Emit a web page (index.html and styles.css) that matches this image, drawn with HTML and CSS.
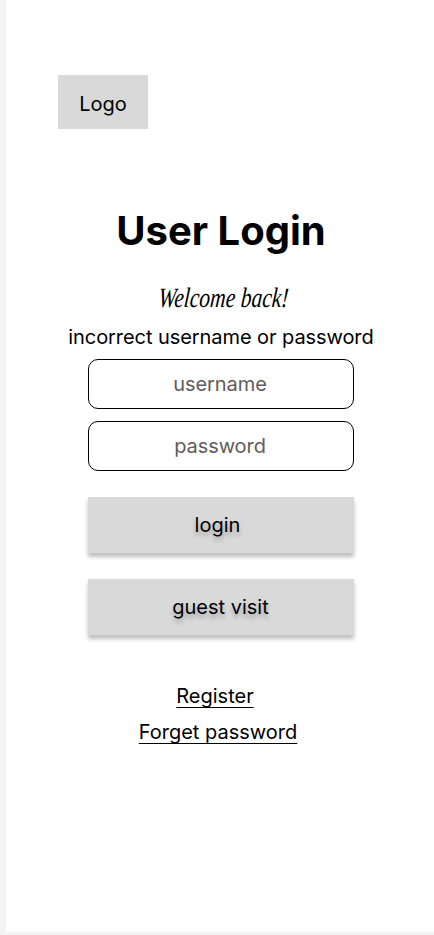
FILE: index.html
```
<!DOCTYPE html>
<html lang="en">
<head>
<meta charset="utf-8">
<title>User Login</title>
<link rel="stylesheet" href="styles.css">
</head>
<body>
<main class="screen">
  <div class="logo">Logo</div>
  <form class="login">
    <h1 class="title">User Login</h1>
    <p class="welcome"><span class="welcome-text">Welcome back!</span></p>
    <p class="error">incorrect username or password</p>
    <input class="field" type="text" placeholder="username">
    <input class="field" type="password" placeholder="password">
    <button class="button" type="button"><span class="login-label">login</span></button>
    <button class="button" type="button"><span class="guest-label">guest visit</span></button>
    <nav class="links">
      <a class="link register" href="#">Register</a>
      <a class="link" href="#">Forget password</a>
    </nav>
  </form>
</main>
</body>
</html>
```

FILE: styles.css
```
* {
  box-sizing: border-box;
}

body {
  margin: 0;
  padding: 0 0 3px 6px;
  height: 935px;
  overflow: hidden;
  background: #f4f4f4;
  color: #000;
  font: 400 20px/24px Inter, sans-serif;
}

.screen {
  height: 932px;
  padding-top: 75px;
  background: #fff;
}

.logo {
  width: 90px;
  height: 54px;
  margin-left: 52px;
  padding-top: 3px;
  display: flex;
  align-items: center;
  justify-content: center;
  background: #d9d9d9;
}

.login {
  width: 430px;
  margin-top: 78px;
  display: flex;
  flex-direction: column;
  align-items: center;
}

.title {
  margin: 0;
  font-size: 40px;
  line-height: 48px;
  font-weight: 700;
}

.welcome {
  margin: 28px 0 0 6px;
  height: 30px;
  font: italic 400 28px/30px "Liberation Serif", serif;
}

.welcome-text {
  display: inline-block;
  white-space: nowrap;
  transform: scaleX(.77) skewX(-6deg);
}

.error {
  margin: 12px 0 10px;
  letter-spacing: -.07px;
}

.field {
  width: 266px;
  height: 50px;
  margin: 0 0 12px;
  padding: 0 2px 0 0;
  border: 1px solid #000;
  border-radius: 10px;
  background: #fff;
  color: #000;
  font: inherit;
  text-align: center;
}

.field::placeholder {
  color: #625b5b;
  opacity: 1;
  letter-spacing: -.07px;
}

.button {
  width: 266px;
  height: 56px;
  margin: 14px 0 12px;
  padding: 0;
  border: 0;
  background: #d9d9d9;
  box-shadow: 0 4px 4px rgba(0, 0, 0, .25);
  color: #000;
  font: inherit;
  text-shadow: 0 4px 4px rgba(0, 0, 0, .25);
}

.login-label {
  margin-right: 7px;
}

.guest-label {
  margin-right: 1px;
}

.links {
  margin-top: 37px;
  display: flex;
  flex-direction: column;
  align-items: center;
  gap: 12px;
  margin-right: 6px;
}

.link {
  color: #000;
  text-decoration: underline 1px;
  text-underline-offset: 4px;
  text-decoration-skip-ink: none;
}

.register {
  margin-right: 6px;
}
```
